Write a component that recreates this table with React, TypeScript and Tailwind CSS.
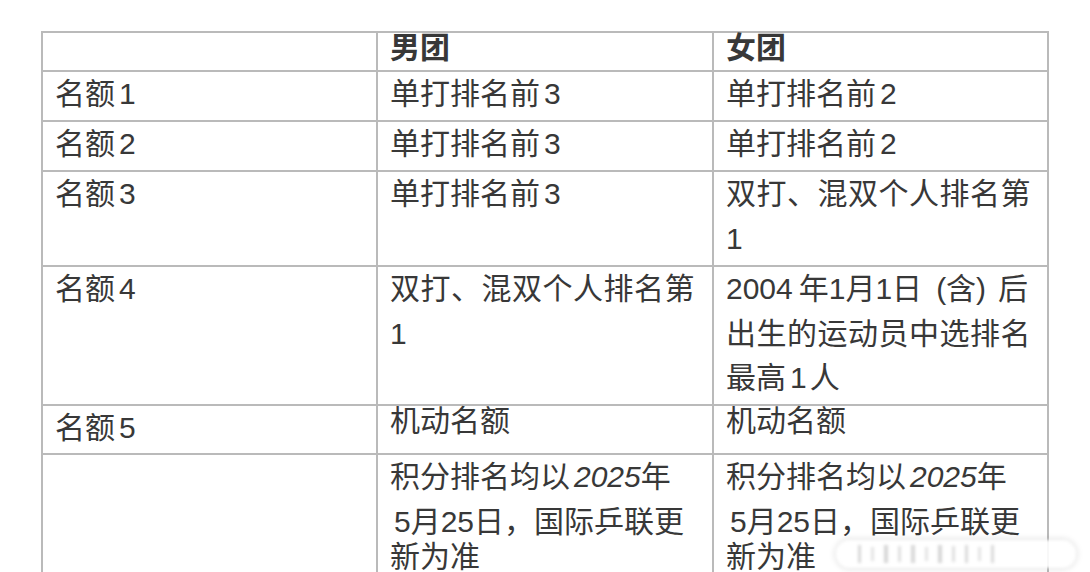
import React from "react";

const font = {
  fontFamily: '"Liberation Sans", "Noto Sans CJK SC", sans-serif',
};

function Cell({
  children,
  className = "",
}: {
  children?: React.ReactNode;
  className?: string;
}) {
  return (
    <div
      className={
        "border-r-2 border-[#bababa] pl-[12px] text-[30px] leading-[44.5px] text-[#383838] whitespace-nowrap " +
        className
      }
    >
      {children}
    </div>
  );
}

function Row({
  h,
  children,
  last = false,
}: {
  h: string;
  children: React.ReactNode;
  last?: boolean;
}) {
  return (
    <div
      className={
        "grid grid-cols-[335px_336px_335px] border-[#bababa] " +
        (last ? "" : "border-b-2 ") +
        h
      }
    >
      {children}
    </div>
  );
}

function D({ children }: { children: React.ReactNode }) {
  return <span className="ml-[4px]">{children}</span>;
}

export default function App() {
  return (
    <div
      className="relative w-[1090px] h-[572px] overflow-hidden bg-white"
      style={font}
    >
      <div className="pl-[41px] pt-[31px]">
        <div className="w-[1008px] border-l-2 border-t-2 border-[#bababa]">
          {/* header */}
          <Row h="h-[39px]">
            <Cell />
            <Cell className="font-bold text-[29px] leading-[27px]">
              <div className="-mt-[7px]">男团</div>
            </Cell>
            <Cell className="font-bold text-[29px] leading-[27px]">
              <div className="-mt-[7px]">女团</div>
            </Cell>
          </Row>
          <Row h="h-[50px]">
            <Cell>
              名额<D>1</D>
            </Cell>
            <Cell>
              单打排名前<D>3</D>
            </Cell>
            <Cell>
              单打排名前<D>2</D>
            </Cell>
          </Row>
          <Row h="h-[50px]">
            <Cell>
              名额<D>2</D>
            </Cell>
            <Cell>
              单打排名前<D>3</D>
            </Cell>
            <Cell>
              单打排名前<D>2</D>
            </Cell>
          </Row>
          <Row h="h-[95px]">
            <Cell>
              名额<D>3</D>
            </Cell>
            <Cell>
              单打排名前<D>3</D>
            </Cell>
            <Cell>
              <div className="tracking-[0.5px]">双打、混双个人排名第</div>
              <div>1</div>
            </Cell>
          </Row>
          <Row h="h-[139px]">
            <Cell>
              名额<D>4</D>
            </Cell>
            <Cell>
              <div className="tracking-[0.5px]">双打、混双个人排名第</div>
              <div>1</div>
            </Cell>
            <Cell>
              <div>
                2004<span className="ml-[6px]">年1月1日</span>
                <span className="ml-[14px]">(含)</span>
                <span className="ml-[12px]">后</span>
              </div>
              <div className="tracking-[0.5px]">出生的运动员中选排名</div>
              <div>
                最高<D>1</D>
                <span className="ml-[3px]">人</span>
              </div>
            </Cell>
          </Row>
          <Row h="h-[49px]">
            <Cell>
              名额<D>5</D>
            </Cell>
            <Cell className="leading-[27px]">
              <div className="-mt-[7px]">机动名额</div>
            </Cell>
            <Cell className="leading-[27px]">
              <div className="-mt-[7px]">机动名额</div>
            </Cell>
          </Row>
          <Row h="h-[150px]" last>
            <Cell />
            <Cell>
              <div>
                积分排名均以<span className="ml-[4px] italic">2025</span>年
              </div>
              <div className="mb-[-9px] pl-[4px]">
                5月25日，国际乒联更
              </div>
              <div>新为准</div>
            </Cell>
            <Cell>
              <div>
                积分排名均以<span className="ml-[4px] italic">2025</span>年
              </div>
              <div className="mb-[-9px] pl-[4px]">
                5月25日，国际乒联更
              </div>
              <div>新为准</div>
            </Cell>
          </Row>
        </div>
      </div>
      {/* blurred watermark */}
      <div className="absolute left-[836px] top-[540px] h-[28px] w-[240px] rounded-full bg-white/90 shadow-[0_0_6px_rgba(0,0,0,0.18)] blur-[1.5px]">
        <div className="flex h-full items-center gap-[10px] pl-[22px]">
          <div className="h-[18px] w-[3px] bg-[#d8d8d8]" />
          <div className="h-[14px] w-[3px] bg-[#e4e4e4]" />
          <div className="h-[18px] w-[4px] bg-[#d6d6d6]" />
          <div className="h-[16px] w-[3px] bg-[#e0e0e0]" />
          <div className="h-[18px] w-[4px] bg-[#d8d8d8]" />
          <div className="h-[14px] w-[3px] bg-[#e4e4e4]" />
          <div className="h-[18px] w-[4px] bg-[#d6d6d6]" />
          <div className="h-[16px] w-[3px] bg-[#e0e0e0]" />
          <div className="h-[18px] w-[3px] bg-[#dadada]" />
          <div className="h-[14px] w-[3px] bg-[#e4e4e4]" />
          <div className="h-[18px] w-[3px] bg-[#dadada]" />
        </div>
      </div>
    </div>
  );
}
